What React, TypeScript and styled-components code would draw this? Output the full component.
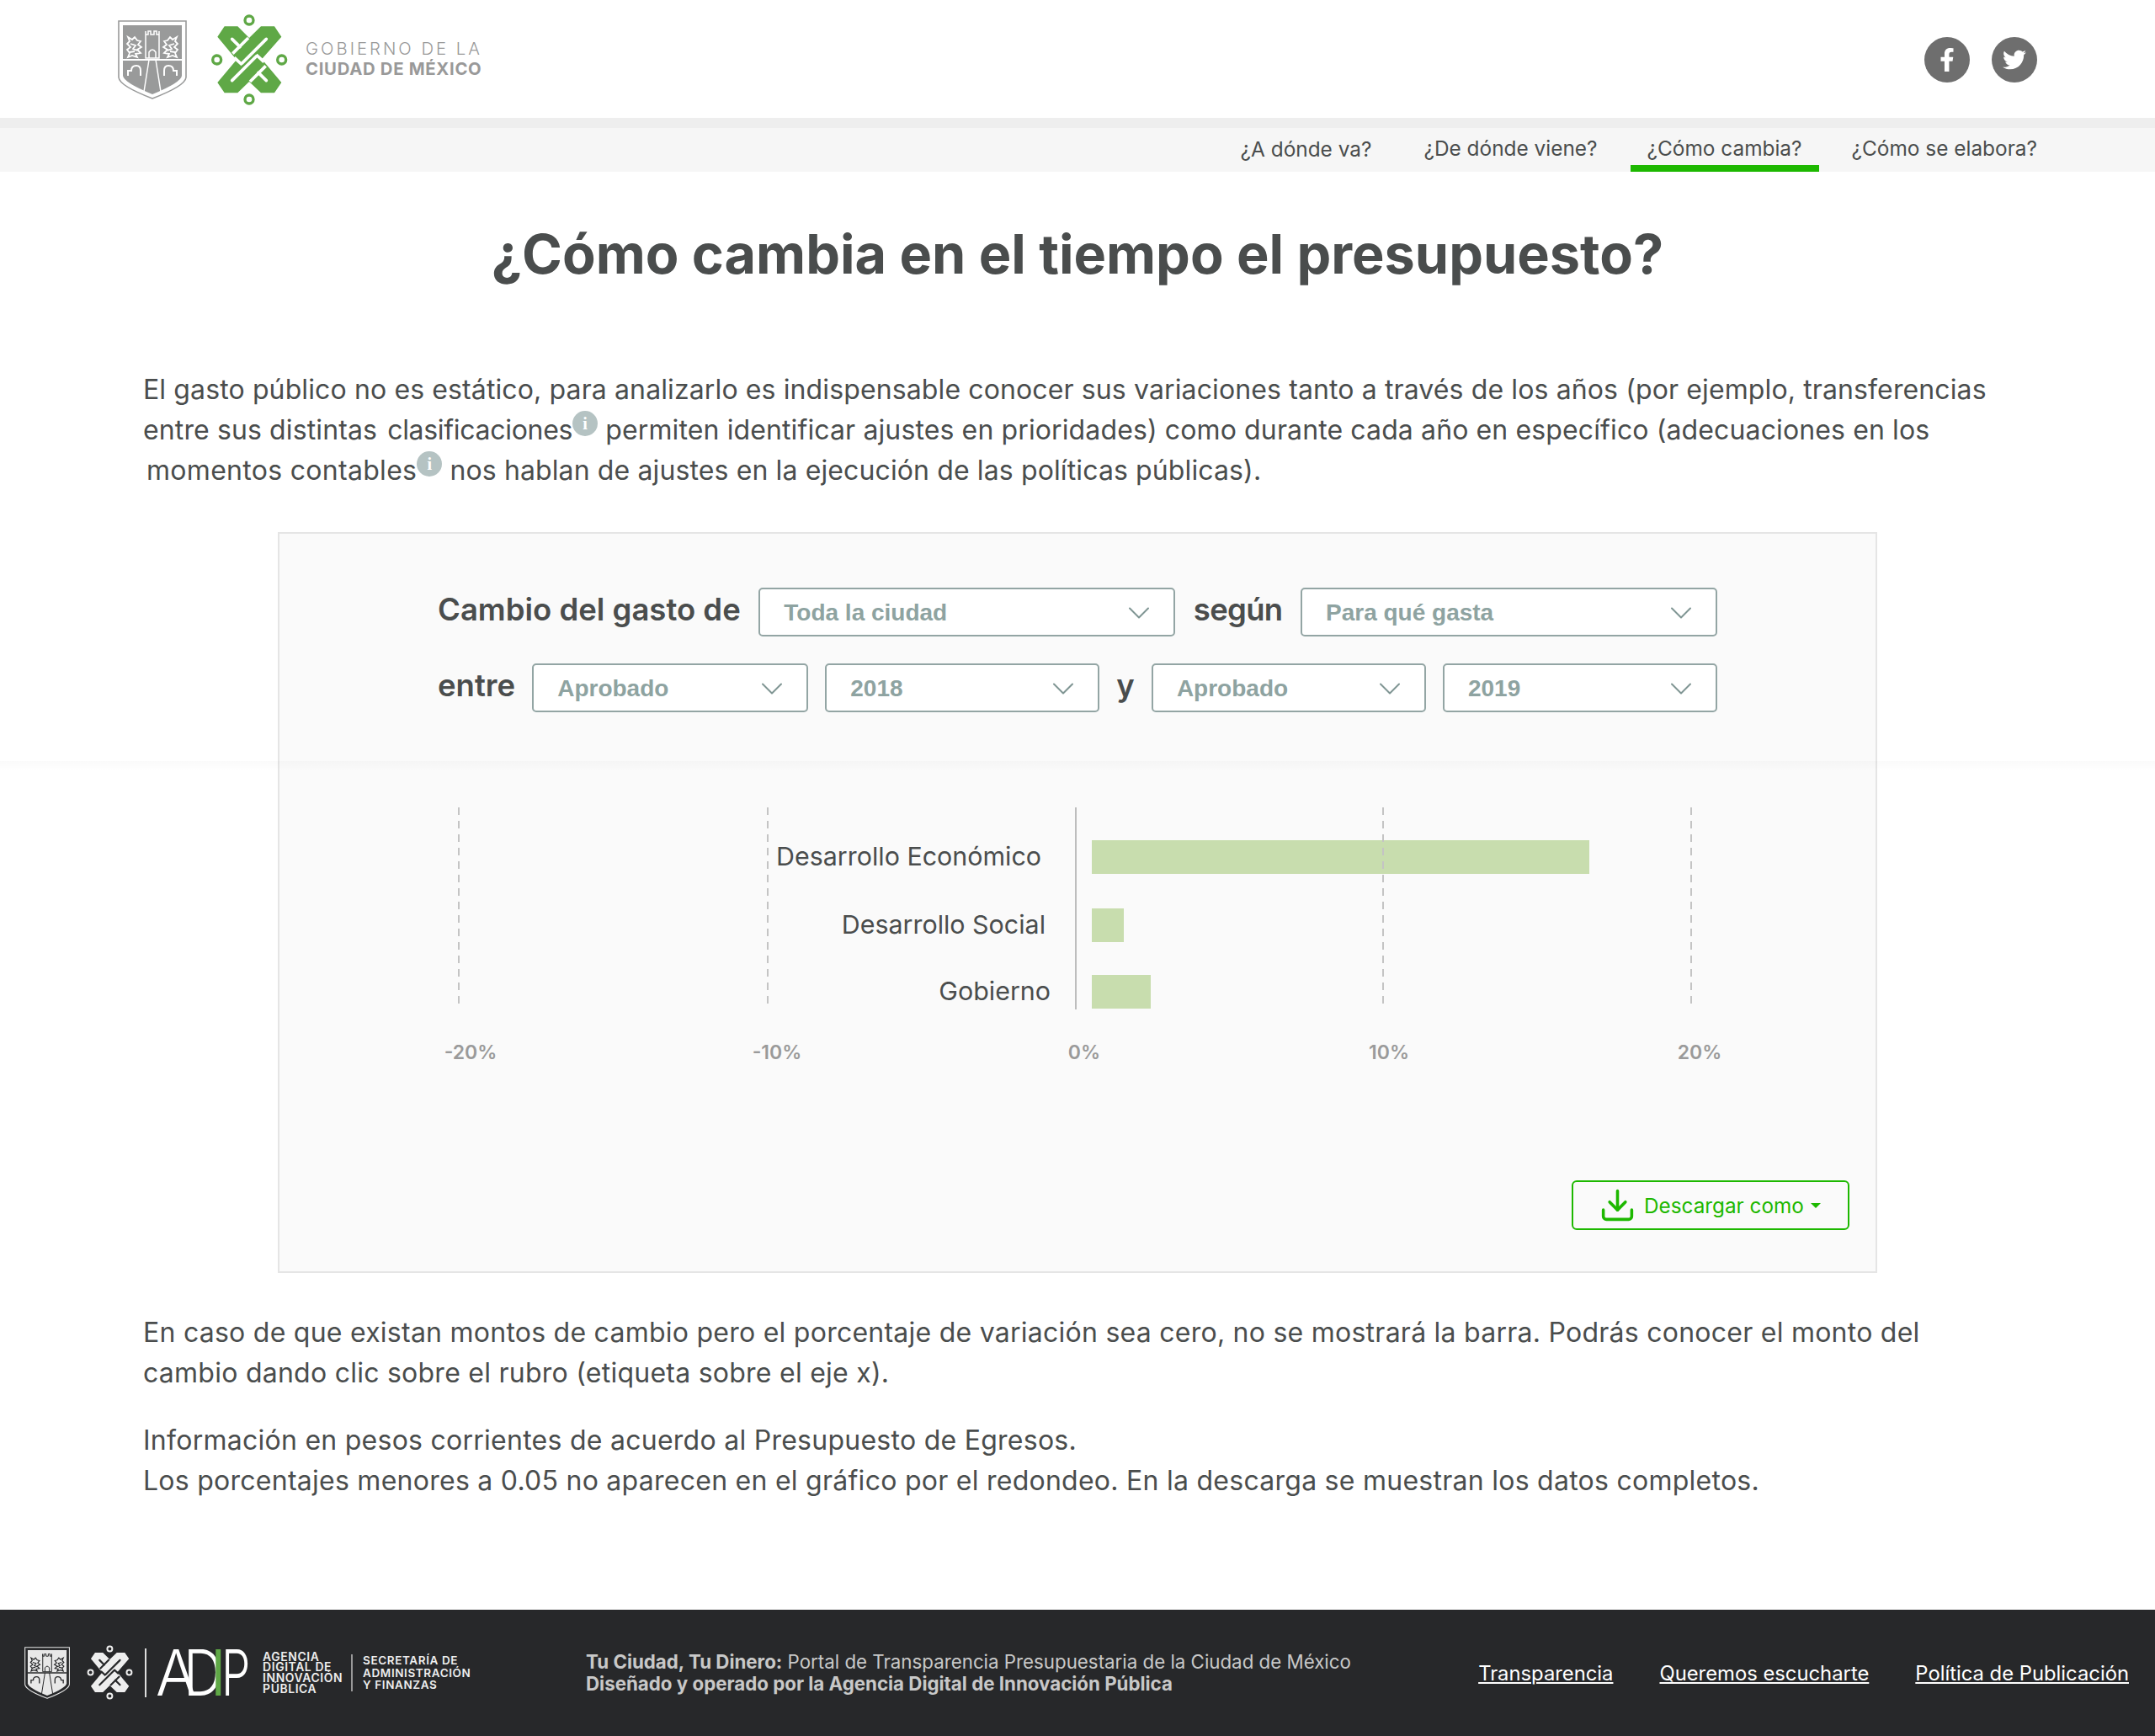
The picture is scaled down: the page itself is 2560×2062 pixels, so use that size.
import React from 'react';
import styled, { createGlobalStyle } from 'styled-components';
import { ChevronDown, Download } from 'lucide-react';
import { FaFacebookF, FaTwitter } from 'react-icons/fa';

const GlobalStyle = createGlobalStyle`
  html, body { margin: 0; padding: 0; background: #fff; }
  body { font-family: Inter, "Noto Sans", sans-serif; color: #4a4d4d; }
  * { box-sizing: border-box; }
`;

const Page = styled.div`
  position: relative;
  width: 2560px;
  height: 2062px;
  display: flex;
  flex-direction: column;
  overflow: hidden;
`;

// faint shadow band that crosses the whole page
const ShadowBand = styled.div`
  position: absolute;
  left: 0;
  right: 0;
  top: 904px;
  height: 12px;
  background: linear-gradient(rgba(0, 0, 0, 0.018), rgba(0, 0, 0, 0));
  pointer-events: none;
`;

const Header = styled.header`
  height: 140px;
  display: flex;
  align-items: center;
  justify-content: space-between;
  padding: 1px 140px 0;
`;
const Brand = styled.div`
  display: flex;
  align-items: center;
`;
const Spacer = styled.span<{ $width: number }>`
  flex: none;
  width: ${(p) => p.$width}px;
`;
const BrandText = styled.div`
  margin: -1px 0 0 14px;
  font-size: 20.3px;
  line-height: 24px;
  color: #999;
  letter-spacing: 3px;
  font-weight: 300;
  white-space: nowrap;
  b {
    display: block;
    font-weight: 700;
    letter-spacing: 0.7px;
  }
`;
const Socials = styled.div`
  display: flex;
  gap: 26px;
`;
const SocialLink = styled.a`
  width: 54px;
  height: 54px;
  border-radius: 50%;
  background: #6e6e6e;
  color: #fff;
  display: flex;
  align-items: center;
  justify-content: center;
  font-size: 28px;
`;

const NavBar = styled.nav`
  height: 64px;
  border-top: 12px solid #eee;
  background: #f6f6f6;
  display: flex;
  justify-content: flex-end;
  padding-right: 120px;
  gap: 19px;
`;
const NavItem = styled.a<{ $active?: boolean }>`
  height: 52px;
  padding: 10px 20px 0;
  font-size: 24.4px;
  line-height: 28px;
  color: #4a4d4d;
  white-space: nowrap;
  border-bottom: 8px solid ${(p) => (p.$active ? '#1db800' : 'transparent')};
  &:first-child {
    margin-right: 3px;
    padding-top: 11px;
  }
`;

const Title = styled.h1`
  margin: 60px 0 0;
  height: 76px;
  text-align: center;
  font-size: 64.75px;
  line-height: 76px;
  font-weight: 700;
  color: #4a4d4d;
`;

const Text = styled.p<{ $top: number; $tracking: number }>`
  margin: ${(p) => p.$top}px 0 0;
  padding-left: 170px;
  font-size: 32px;
  line-height: 48px;
  letter-spacing: ${(p) => p.$tracking}px;
  color: #4a4d4d;
  white-space: nowrap;
`;
const Indent = styled.span`
  margin-left: 4px;
  letter-spacing: 0.3px;
`;
const Term = styled.span`
  margin-left: 3px;
  letter-spacing: -0.3px;
`;
const InfoDot = styled.span`
  display: inline-flex;
  align-items: center;
  justify-content: center;
  width: 30px;
  height: 30px;
  border-radius: 50%;
  background: #b5c3c3;
  color: #fff;
  font-family: "Liberation Serif", serif;
  font-weight: 700;
  font-size: 20px;
  line-height: 1;
  vertical-align: 12px;
`;

const Panel = styled.section`
  width: 1900px;
  height: 880px;
  margin: 49px 0 0 330px;
  border: 2px solid #e5e5e5;
  background: #fafafa;
  padding-top: 64px;
`;
const Filters = styled.div`
  display: flex;
  flex-direction: column;
  gap: 32px;
  width: 1520px;
  margin-left: 188px;
`;
const FilterRow = styled.div`
  display: flex;
  align-items: center;
  justify-content: space-between;
`;
const FilterLabel = styled.span<{ $tight?: boolean }>`
  font-size: 36.5px;
  line-height: 58px;
  font-weight: 600;
  letter-spacing: ${(p) => (p.$tight ? '-0.7px' : '0')};
  color: #4a4d4d;
  white-space: nowrap;
  margin-top: -6px;
`;
const Select = styled.div<{ $width: number }>`
  width: ${(p) => p.$width}px;
  height: 58px;
  display: flex;
  align-items: center;
  justify-content: space-between;
  padding: 2px 19px 0 28px;
  background: #fff;
  border: 2px solid #93a5a4;
  border-radius: 5px;
  font-family: "Liberation Sans", Arial, sans-serif;
  font-weight: 700;
  font-size: 28px;
  color: #8ea3a1;
  white-space: nowrap;
`;

const Chart = styled.svg`
  display: block;
  margin-top: 94px;
`;
const BarLabel = styled.text`
  font-size: 30.4px;
  fill: #4a4d4d;
  text-anchor: end;
`;
const AxisLabel = styled.text`
  font-size: 23px;
  font-weight: 600;
  fill: #9a9a9a;
  text-anchor: middle;
`;

const PanelFooter = styled.div`
  display: flex;
  justify-content: flex-end;
  padding-right: 31px;
  margin-top: 122px;
`;
const DownloadButton = styled.button`
  width: 330px;
  height: 59px;
  padding: 0 0 0 30px;
  display: flex;
  align-items: center;
  background: transparent;
  border: 2px solid #1db800;
  border-radius: 6px;
  color: #1db800;
  font-family: inherit;
  font-size: 24.3px;
  white-space: nowrap;
`;
const ButtonLabel = styled.span`
  margin-left: 9px;
`;
const Caret = styled.span`
  margin-left: 8px;
  width: 0;
  height: 0;
  border-left: 6px solid transparent;
  border-right: 6px solid transparent;
  border-top: 6px solid #1db800;
`;

const Footer = styled.footer`
  margin-top: auto;
  height: 150px;
  background: #27282a;
  display: flex;
  align-items: center;
  padding-left: 29px;
`;
const FooterBrand = styled.div`
  display: flex;
  align-items: center;
  width: 667px;
`;
const Divider = styled.span`
  width: 2px;
  height: 58px;
  background: #ddd;
  margin: 0 12px 0 10px;
`;
const AdipSvg = styled.svg`
  overflow: visible;
  flex: none;
`;
const AgencyText = styled.div`
  margin-left: 16px;
  font-size: 13.9px;
  line-height: 12.6px;
  font-weight: 600;
  letter-spacing: 0.6px;
  color: #eee;
  white-space: nowrap;
`;
const SecretaryText = styled.div`
  margin-left: 10px;
  padding-left: 12px;
  border-left: 2px solid #999;
  font-size: 13.5px;
  line-height: 14.5px;
  font-weight: 600;
  letter-spacing: 0.6px;
  color: #eee;
  white-space: nowrap;
`;
const FooterInfo = styled.div`
  font-size: 22.3px;
  line-height: 26px;
  color: #c8c8c8;
  white-space: nowrap;
  b {
    font-weight: 700;
  }
`;
const FooterLinks = styled.div`
  margin-left: auto;
  padding-right: 31px;
  display: flex;
  gap: 55px;
`;
const FooterLink = styled.a`
  font-size: 23.8px;
  color: #fff;
  text-decoration: underline;
  white-space: nowrap;
`;

const CdmxMark: React.FC<{ size: number; color: string; ground: string }> = ({
  size,
  color,
  ground,
}) => (
  <svg width={size} height={(size * 348) / 312} viewBox="0 0 312 348">
    {[
      [153, 33],
      [153, 315],
      [38, 174],
      [269, 174],
    ].map(([cx, cy]) => (
      <circle
        key={`${cx}-${cy}`}
        cx={cx}
        cy={cy}
        r="15"
        fill="none"
        stroke={color}
        strokeWidth="10"
      />
    ))}
    <polygon
      fill={color}
      points="40,92 65,55 112,55 153,96 195,55 243,55 268,92 198,172 268,255 243,292 195,292 153,252 112,292 65,292 40,255 108,174"
    />
    <g stroke={ground} strokeWidth="11" strokeLinecap="round" fill="none">
      <path d="M214 100 L128 186 M92 248 L178 162" />
      <path d="M92 100 L120 128 M214 248 L186 220" />
      <path d="M150 96 L94 152 M156 252 L212 196" strokeLinecap="butt" />
      <path d="M100 166 L128 192 M206 182 L178 156" strokeLinecap="butt" />
    </g>
  </svg>
);

const Shield: React.FC<{ height: number; color: string; ink: string; ground: string }> = ({
  height,
  color,
  ink,
  ground,
}) => (
  <svg width={(height * 82) / 94} height={height} viewBox="0 0 82 94">
    <path
      d="M1 1 H81 V68 Q80 78 41 93 Q2 78 1 68 Z"
      fill={ground}
      stroke={color}
      strokeWidth="1.6"
    />
    <path d="M6 6 H76 V66 Q75 74 41 88 Q7 74 6 66 Z" fill={color} />
    <g fill="none" stroke={ink} strokeWidth="1.5">
      <path d="M6 47 H76" strokeWidth="2" />
      <path d="M33 13 V17 H36 V13 H39 V17 H43 V13 H46 V17 H49 V13 V45 H33 Z" />
      <path d="M37 45 V38 Q41 32 45 38 V45" />
      <path d="M37 47 L31 85 M45 47 L51 85" />
      <path d="M12 66 V60 H16 Q16 54 22 54 Q27 54 27 60 V66" strokeWidth="2" />
      <path d="M55 66 V60 Q55 54 60 54 Q66 54 66 60 H70 V66" strokeWidth="2" />
      <path
        d="M12 20 l5 3 l3 -3 l3 4 l4 1 l-3 4 l4 3 l-5 3 l4 4 l-6 1 l2 4 l-6 -2 l-5 2 l2 -5 l-3 -4 l4 -3 l-4 -4 l3 -3 z M15 28 l6 2 l-3 4 l5 2 M14 38 l6 -1"
        strokeWidth="1.8"
      />
      <path
        d="M70 20 l-5 3 l-3 -3 l-3 4 l-4 1 l3 4 l-4 3 l5 3 l-4 4 l6 1 l-2 4 l6 -2 l5 2 l-2 -5 l3 -4 l-4 -3 l4 -4 l-3 -3 z M67 28 l-6 2 l3 4 l-5 2 M68 38 l-6 -1"
        strokeWidth="1.8"
      />
    </g>
  </svg>
);

// the agency's lettering, tall and stretched, kept as text
const AdipMark = () => (
  <AdipSvg width="110" height="56" viewBox="0 0 110 56">
    <g fontFamily="Inter, sans-serif" fontWeight="300" fontSize="76" fill="#fff">
      <text transform="translate(-1 55) scale(0.95 1)">A</text>
      <text transform="translate(32 55) scale(0.85 1)">D</text>
      <text transform="translate(77 55) scale(0.72 1)">P</text>
      <text transform="translate(66 55) scale(0.7 1)" fill="#5fa846" fontWeight="500">
        I
      </text>
    </g>
  </AdipSvg>
);

const navItems = ['¿A dónde va?', '¿De dónde viene?', '¿Cómo cambia?', '¿Cómo se elabora?'];

const gridLines = [544, 911, 1642, 2008];

const bars = [
  { label: 'Desarrollo Económico', y: 997, width: 591, labelX: 1236 },
  { label: 'Desarrollo Social', y: 1078, width: 38, labelX: 1241 },
  { label: 'Gobierno', y: 1157, width: 70, labelX: 1247 },
];

const axisLabels = [
  { text: '-20%', x: 558 },
  { text: '-10%', x: 922 },
  { text: '0%', x: 1287 },
  { text: '10%', x: 1649 },
  { text: '20%', x: 2018 },
];

const Dropdown: React.FC<{ width: number; value: string }> = ({ width, value }) => (
  <Select $width={width}>
    <span>{value}</span>
    <ChevronDown size={44} strokeWidth={1.1} color="#7f9593" />
  </Select>
);

const App: React.FC = () => (
  <Page>
    <GlobalStyle />
    <ShadowBand />
    <Header>
      <Brand>
        <Shield height={94} color="#999a9a" ink="#fff" ground="#fff" />
        <Spacer $width={23} />
        <CdmxMark size={104} color="#5fa846" ground="#fff" />
        <BrandText>
          GOBIERNO DE LA
          <b>CIUDAD DE MÉXICO</b>
        </BrandText>
      </Brand>
      <Socials>
        <SocialLink>
          <FaFacebookF />
        </SocialLink>
        <SocialLink>
          <FaTwitter />
        </SocialLink>
      </Socials>
    </Header>
    <NavBar>
      {navItems.map((item, i) => (
        <NavItem key={item} $active={i === 2}>
          {item}
        </NavItem>
      ))}
    </NavBar>

    <Title>¿Cómo cambia en el tiempo el presupuesto?</Title>

    <Text $top={99} $tracking={0.12}>
      El gasto público no es estático, para analizarlo es indispensable conocer sus variaciones tanto a través de los años (por ejemplo, transferencias
      <br />
      entre sus distintas <Term>clasificaciones</Term>
      <InfoDot>i</InfoDot> permiten identificar ajustes en prioridades) como durante cada año en específico (adecuaciones en los
      <br />
      <Indent>momentos contables</Indent>
      <InfoDot>i</InfoDot> nos hablan de ajustes en la ejecución de las políticas públicas).
    </Text>

    <Panel>
      <Filters>
        <FilterRow>
          <FilterLabel>Cambio del gasto de</FilterLabel>
          <Dropdown width={495} value="Toda la ciudad" />
          <FilterLabel $tight>según</FilterLabel>
          <Dropdown width={495} value="Para qué gasta" />
        </FilterRow>
        <FilterRow>
          <FilterLabel>entre</FilterLabel>
          <Dropdown width={328} value="Aprobado" />
          <Dropdown width={326} value="2018" />
          <FilterLabel>y</FilterLabel>
          <Dropdown width={326} value="Aprobado" />
          <Dropdown width={326} value="2019" />
        </FilterRow>
      </Filters>

      <Chart width="1896" height="340" viewBox="331 939 1896 340">
        {bars.map((bar) => (
          <g key={bar.label}>
            <rect x="1296" y={bar.y} width={bar.width} height="40" fill="#c8ddae" />
            <BarLabel x={bar.labelX} y={bar.y + 30}>
              {bar.label}
            </BarLabel>
          </g>
        ))}
        {gridLines.map((x) => (
          <line key={x} x1={x} x2={x} y1="958" y2="1192" stroke="#c4c4c4" strokeWidth="2" strokeDasharray="9 7" />
        ))}
        <line x1="1277" x2="1277" y1="958" y2="1198" stroke="#bdbdbd" strokeWidth="2" />
        {axisLabels.map((a) => (
          <AxisLabel key={a.text} x={a.x} y="1257">
            {a.text}
          </AxisLabel>
        ))}
      </Chart>

      <PanelFooter>
        <DownloadButton>
          <Download size={45} strokeWidth={1.9} />
          <ButtonLabel>Descargar como</ButtonLabel>
          <Caret />
        </DownloadButton>
      </PanelFooter>
    </Panel>

    <Text $top={47} $tracking={0.25}>
      En caso de que existan montos de cambio pero el porcentaje de variación sea cero, no se mostrará la barra. Podrás conocer el monto del
      <br />
      cambio dando clic sobre el rubro (etiqueta sobre el eje x).
    </Text>
    <Text $top={32} $tracking={0.26}>
      Información en pesos corrientes de acuerdo al Presupuesto de Egresos.
      <br />
      Los porcentajes menores a 0.05 no aparecen en el gráfico por el redondeo. En la descarga se muestran los datos completos.
    </Text>

    <Footer>
      <FooterBrand>
        <Shield height={62} color="#e8e8e8" ink="#27282a" ground="#27282a" />
        <Spacer $width={17} />
        <CdmxMark size={62} color="#eee" ground="#27282a" />
        <Divider />
        <AdipMark />
        <AgencyText>
          AGENCIA
          <br />
          DIGITAL DE
          <br />
          INNOVACIÓN
          <br />
          PÚBLICA
        </AgencyText>
        <SecretaryText>
          SECRETARÍA DE
          <br />
          ADMINISTRACIÓN
          <br />Y FINANZAS
        </SecretaryText>
      </FooterBrand>
      <FooterInfo>
        <b>Tu Ciudad, Tu Dinero:</b> Portal de Transparencia Presupuestaria de la Ciudad de México
        <br />
        <b>Diseñado y operado por la Agencia Digital de Innovación Pública</b>
      </FooterInfo>
      <FooterLinks>
        <FooterLink>Transparencia</FooterLink>
        <FooterLink>Queremos escucharte</FooterLink>
        <FooterLink>Política de Publicación</FooterLink>
      </FooterLinks>
    </Footer>
  </Page>
);

export default App;
